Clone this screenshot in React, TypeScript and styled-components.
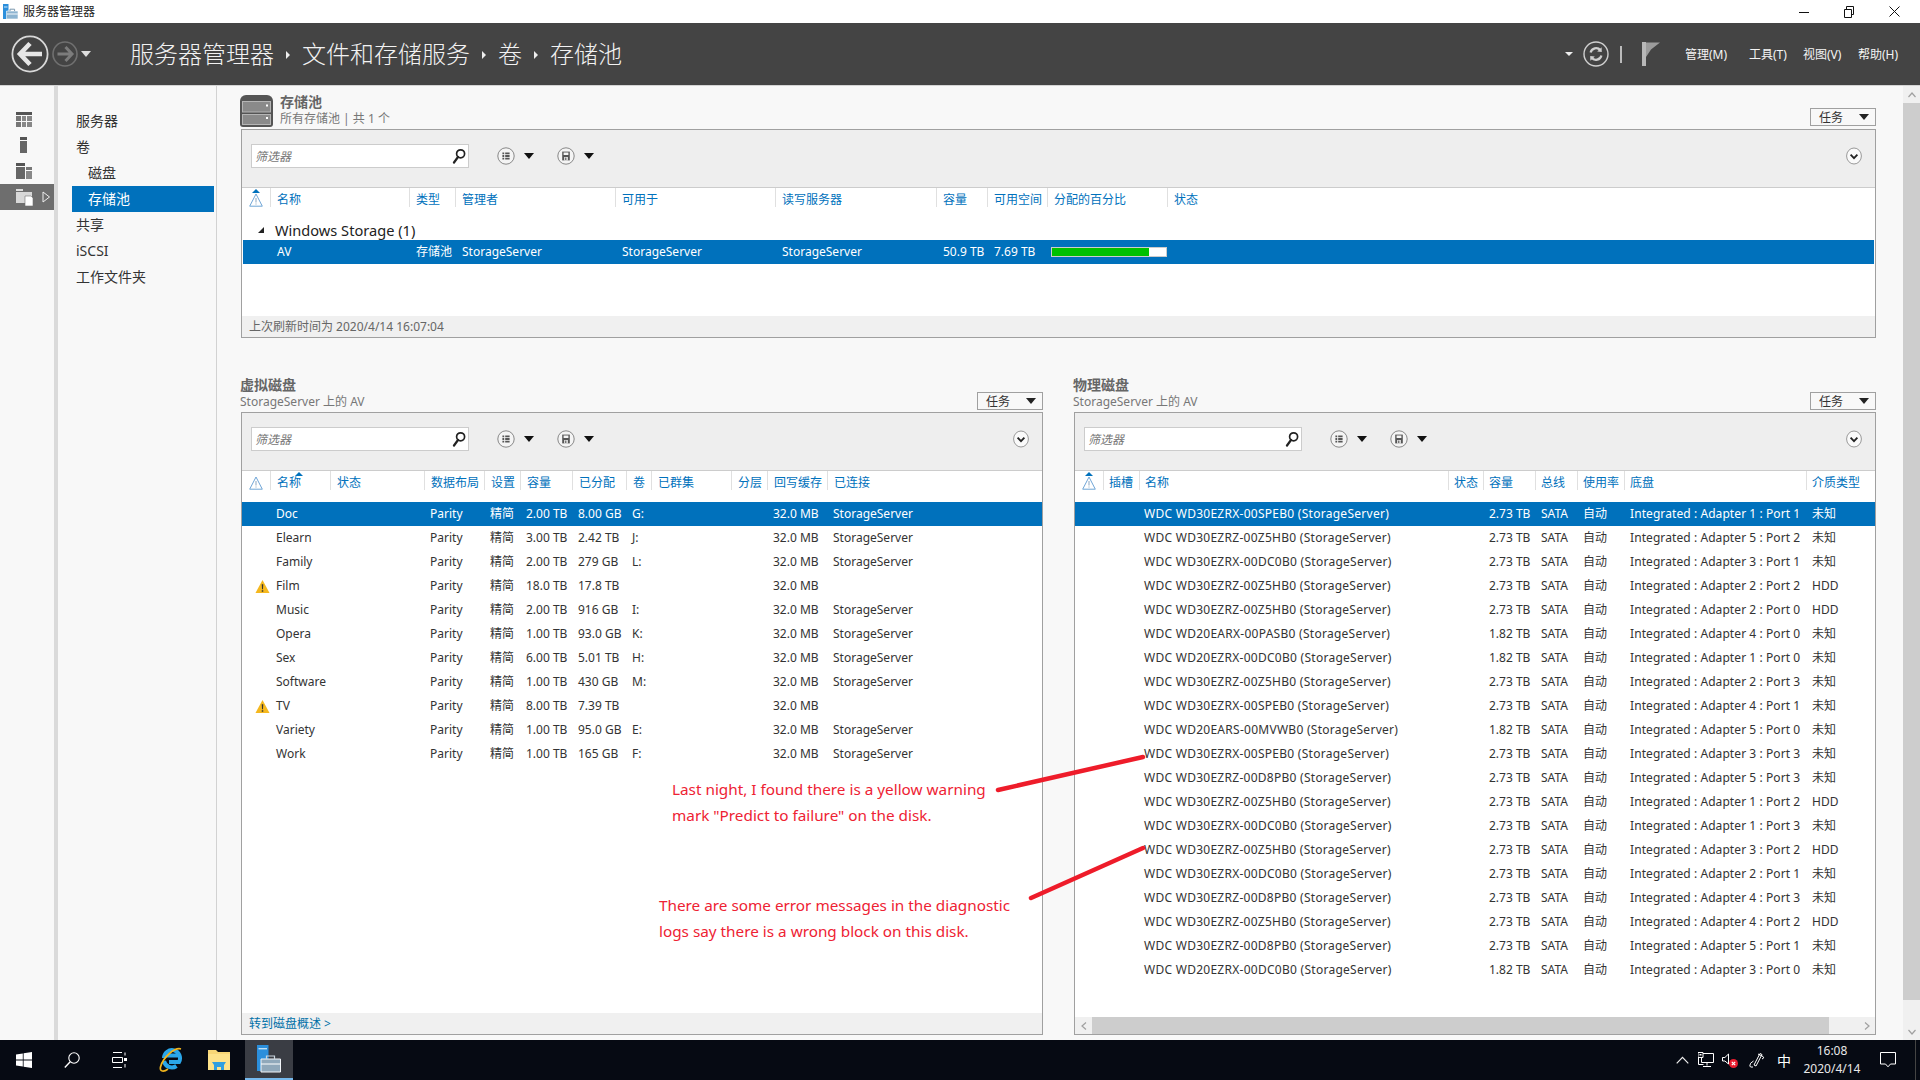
import React from "react";
import styled, { createGlobalStyle } from "styled-components";

const FONT = `"Noto Sans", "Noto Sans CJK SC", sans-serif`;
const BLUE = "#0071bc";

const Global = createGlobalStyle`
  html, body { margin: 0; padding: 0; background: #f8f8f8; }
  * { box-sizing: border-box; }
  body { font-family: ${FONT}; font-size: 12px; color: #333; overflow: hidden; }
`;

const Page = styled.div`
  position: relative; width: 1920px; height: 1080px; display: flex; flex-direction: column; overflow: hidden;
`;
const TitleBar = styled.div`
  height: 23px; flex: none; background: #fff; display: flex; align-items: center; padding-left: 3px; color: #222;
`;
const TitleText = styled.span`margin-left: 5px; font-size: 12px; line-height: 23px;`;
const WinControls = styled.div`margin-left: auto; display: flex; height: 23px; align-items: center; gap: 35px; padding-right: 20px;`;

const Header = styled.header`
  height: 63px; flex: none; background: #444; border-bottom: 1px solid #d4d4d4; display: flex; align-items: center; color: #fff;
`;
const NavButtons = styled.div`margin-left: 11px; display: flex; align-items: center; gap: 3px; width: 119px;`;
const Crumbs = styled.div`display: flex; align-items: center; font-size: 24px; font-weight: 300; color: #f2f2f2; line-height: 30px; white-space: nowrap;`;
const CrumbArrow = styled.i`
  display: block; width: 0; height: 0; border-left: 4px solid #eee; border-top: 4px solid transparent; border-bottom: 4px solid transparent; margin: 2px 12px 0 12px;
`;
const HeaderRight = styled.div`margin-left: auto; display: flex; align-items: center; height: 100%;`;
const Caret = styled.i<{ $w: number; $color: string; $mr?: number }>`
  display: block; width: 0; height: 0;
  border-top: ${(p) => Math.round(p.$w * 0.55)}px solid ${(p) => p.$color};
  border-left: ${(p) => p.$w / 2}px solid transparent;
  border-right: ${(p) => p.$w / 2}px solid transparent;
  margin-right: ${(p) => p.$mr ?? 0}px;
`;
const HDivider = styled.i`display: block; width: 2px; height: 17px; background: #bbb; margin: 0 20px 0 11px;`;
const MenuRow = styled.nav`display: flex; margin-left: 25px; margin-right: 21px;`;
const MenuItem = styled.span<{ $w: number }>`width: ${(p) => p.$w}px; font-size: 12px; color: #f4f4f4; white-space: nowrap;`;

const Body = styled.div`flex: 1; min-height: 0; display: flex;`;
const Rail = styled.aside`
  width: 58px; flex: none; background: #f8f8f8; border-right: 4px solid #dadada; padding-top: 20px;
`;
const RailItem = styled.div<{ $active?: boolean }>`
  height: 26px; display: flex; align-items: center; padding-left: 16px; position: relative;
  background: ${(p) => (p.$active ? "#6e6e6e" : "transparent")};
`;
const RailArrow = styled.svg`position: absolute; left: 42px; top: 7px;`;
const SideNav = styled.nav`
  width: 159px; flex: none; background: #f8f8f8; border-right: 1px solid #d2d2d2; padding-top: 22px;
`;
const NavItem = styled.div<{ $sub?: boolean; $active?: boolean }>`
  height: 26px; line-height: 26px; margin: 0 2px 0 14px; font-size: 14px; padding-left: ${(p) => (p.$sub ? 16 : 4)}px;
  background: ${(p) => (p.$active ? BLUE : "transparent")}; color: ${(p) => (p.$active ? "#fff" : "#333")};
`;

const Main = styled.main`
  flex: 1; min-width: 0; background: #f8f8f8; padding: 0 27px 5px 24px; display: flex; flex-direction: column;
`;
const SectionHead = styled.div<{ $h: number }>`
  height: ${(p) => p.$h}px; flex: none; display: flex; align-items: flex-end; justify-content: space-between; padding-bottom: 2px;
`;
const HeadLeft = styled.div`display: flex; align-items: flex-end; margin-left: -1px; gap: 7px;`;
const TitleBlock = styled.div`line-height: 16px;`;
const SecTitle = styled.div`font-size: 14px; font-weight: 700; color: #666; line-height: 17px; margin-bottom: 1px;`;
const SecSub = styled.div`font-size: 12px; color: #777; line-height: 16px;`;
const TaskBtn = styled.div<{ $low?: boolean }>`
  width: 66px; height: 18px; border: 1px solid #a0a0a0; background: #f8f8f8; display: flex; align-items: center; justify-content: space-between;
  padding: 0 6px 0 8px; font-size: 12px; color: #333; margin-bottom: ${(p) => (p.$low ? 0 : 1)}px;
`;
const Panel = styled.section<{ $h?: number }>`
  ${(p) => (p.$h ? `height: ${p.$h}px; flex: none;` : "flex: 1; min-height: 0;")}
  border: 1px solid #a0a0a0; background: #fff; display: flex; flex-direction: column; overflow: hidden;
`;
const Toolbar = styled.div`
  height: 58px; flex: none; background: #eee; border-bottom: 1px solid #ccc; padding: 14px 13px 0 9px; display: flex; align-items: flex-start;
`;
const Filter = styled.div`
  width: 218px; height: 24px; background: #fff; border: 1px solid #ccc; display: flex; align-items: center; justify-content: space-between; padding: 0 2px 0 3px;
  font-size: 12px; font-style: italic; color: #777;
`;
const ToolBtn = styled.div<{ $first?: boolean }>`
  display: flex; align-items: center; gap: 9px; height: 24px; margin-left: ${(p) => (p.$first ? 28 : 23)}px;
`;
const Collapse = styled.div`margin-left: auto; height: 24px; display: flex; align-items: center;`;
const RowGrid = styled.div<{ $cols: string }>`
  display: grid; grid-template-columns: ${(p) => p.$cols};
`;
const HeadRow = styled(RowGrid)<{ $h: number }>`height: ${(p) => p.$h}px; flex: none; position: relative;`;
const HeadCell = styled.div<{ $pad?: number }>`
  height: 19px; line-height: 23px; padding-left: ${(p) => p.$pad ?? 6}px; color: ${BLUE}; font-size: 12px; white-space: nowrap;
  border-left: 1px solid #e0e0e0; position: relative;
`;
const WarnHead = styled.div`height: 19px; padding: 5px 0 0 7px; position: relative;`;
const SortMark = styled.i<{ $left: number }>`
  position: absolute; top: 1px; left: ${(p) => p.$left}px; width: 0; height: 0;
  border-bottom: 4px solid ${BLUE}; border-left: 4px solid transparent; border-right: 4px solid transparent;
`;
const GroupRow = styled.div`
  height: 22px; display: flex; align-items: center; font-size: 14.6px; color: #222; padding: 1px 0 0 16px; gap: 11px; line-height: 22px;
`;
const GroupMark = styled.i`
  width: 0; height: 0; border-bottom: 6px solid #222; border-left: 6px solid transparent; margin-top: 1px;
`;
const DataRow = styled(RowGrid)<{ $sel?: boolean; $inset?: boolean }>`
  height: 24px; line-height: 24px; font-size: 12px; flex: none;
  ${(p) => (p.$inset ? "margin: 0 1px;" : "")}
  background: ${(p) => (p.$sel ? BLUE : "transparent")}; color: ${(p) => (p.$sel ? "#fff" : "#333")};
`;
const Cell = styled.div`padding-left: 6px; white-space: nowrap; display: flex; align-items: center;`;
const DiskName = styled(Cell)`padding-left: 5px; letter-spacing: 0.27px;`;
const PortCell = styled(Cell)`letter-spacing: 0.08px;`;
const IconCell = styled.div`padding-left: 13px; display: flex; align-items: center;`;
const Progress = styled.div`width: 116px; height: 10px; background: #fff; border: 1px solid #ccc; margin-left: -3px;`;
const ProgressFill = styled.div`height: 100%; background: #00c000;`;
const Rows = styled.div`flex: 1; min-height: 0; overflow: hidden;`;
const Footer = styled.div`
  height: 21px; flex: none; background: #f0f0f0; line-height: 22px; font-size: 12px; color: #666; padding-left: 7px;
`;
const FootLink = styled.span`color: #0070a8;`;
const Lower = styled.div`flex: 1; min-height: 0; display: grid; grid-template-columns: 802px 802px; column-gap: 31px;`;
const Column = styled.div`display: flex; flex-direction: column; min-height: 0;`;
const HScroll = styled.div`height: 17px; flex: none; background: #f0f0f0; display: flex; align-items: center;`;
const HArrow = styled.div`width: 17px; flex: none; display: flex; justify-content: center;`;
const HThumb = styled.div`width: 737px; height: 17px; background: #cdcdcd;`;
const HRest = styled.div`flex: 1;`;
const VScroll = styled.div`width: 17px; flex: none; background: #f0f0f0; display: flex; flex-direction: column; align-items: center;`;
const VArrow = styled.div`height: 17px; flex: none; display: flex; align-items: center; justify-content: center;`;
const VThumb = styled.div`width: 17px; height: 897px; flex: none; background: #cdcdcd;`;
const VRest = styled.div`flex: 1;`;

const Taskbar = styled.footer`
  height: 40px; flex: none; background: #060a13; display: flex; align-items: center; color: #f0f0f0; position: relative;
`;
const TaskSlot = styled.div<{ $active?: boolean; $ml?: number }>`
  width: 48px; height: 40px; display: flex; align-items: center; justify-content: center; margin-left: ${(p) => p.$ml ?? 0}px;
  ${(p) => (p.$active ? "background: #3a3d44; border-bottom: 2px solid #76b9ed;" : "")}
`;
const TaskRight = styled.div`margin-left: auto; display: flex; align-items: center; height: 40px;`;
const Tray = styled.div<{ $w: number }>`width: ${(p) => p.$w}px; display: flex; align-items: center; justify-content: center;`;
const ImeGlyph = styled.span`font-size: 14px; color: #fff;`;
const Clock = styled.div`width: 72px; margin-right: 11px; text-align: center; font-size: 12px; line-height: 18px; color: #e8e8e8;`;
const Edge = styled.i`display: block; width: 1px; height: 40px; background: #444; margin-left: 18px; margin-right: 4px;`;

const Overlay = styled.svg`position: absolute; left: 0; top: 0; pointer-events: none;`;
const Note = styled.div<{ $x: number; $y: number }>`
  position: absolute; left: ${(p) => p.$x}px; top: ${(p) => p.$y}px; color: #ee2233; font-size: 15.3px; line-height: 26px; white-space: nowrap;
`;

/* ---------- icons ---------- */
const Warn = ({ size = 15 }: { size?: number }) => (
  <svg width={size} height={size} viewBox="0 0 16 16">
    <path d="M8 1 L15.5 15 H.5 Z" fill="#f5b81e" />
    <path d="M7.2 5.5h1.6l-.3 5.5h-1zM7.2 12h1.6v1.6H7.2z" fill="#333" />
  </svg>
);
const WarnOutline = () => (
  <svg width="14" height="14" viewBox="0 0 14 14">
    <path d="M7 1 L13.3 13.2 H.7 Z" fill="none" stroke="#6fa5d6" strokeWidth="1" />
    <path d="M6.6 5h.8v4.6h-.8zM6.6 10.4h.8v1h-.8z" fill="#6f8fb0" />
  </svg>
);
const Search = () => (
  <svg width="14" height="16" viewBox="0 0 14 16">
    <circle cx="8.6" cy="5.8" r="4" fill="none" stroke="#222" strokeWidth="1.7" />
    <path d="M6 9 L2 14.5" stroke="#222" strokeWidth="2.2" strokeLinecap="round" />
  </svg>
);
const ListIcon = () => (
  <svg width="18" height="18" viewBox="0 0 18 18">
    <circle cx="9" cy="9" r="8.2" fill="#f4f4f4" stroke="#888" strokeWidth="1" />
    <path d="M5.4 5.5h1.8v1.8H5.4zM8.2 5.5h4.4v1.8H8.2zM5.4 8.1h1.8v1.8H5.4zM8.2 8.1h4.4v1.8H8.2zM5.4 10.7h1.8v1.8H5.4zM8.2 10.7h4.4v1.8H8.2z" fill="#555" />
  </svg>
);
const SaveIcon = () => (
  <svg width="18" height="18" viewBox="0 0 18 18">
    <circle cx="9" cy="9" r="8.2" fill="#f4f4f4" stroke="#888" strokeWidth="1" />
    <path d="M5.2 4.6h7.6v8.8H5.2z" fill="#555" />
    <path d="M6.6 5.4h4.8v2.6H6.6zM7.2 10h3.6v3.4H7.2z" fill="#f4f4f4" />
    <path d="M8.2 10.6h1.2v2.4H8.2z" fill="#555" />
  </svg>
);
const ChevronCircle = () => (
  <svg width="16" height="18" viewBox="0 0 16 18">
    <ellipse cx="8" cy="9" rx="7.4" ry="8" fill="#fafafa" stroke="#999" strokeWidth="1" />
    <path d="M4.6 7.6 L8 11.2 L11.4 7.6" fill="none" stroke="#222" strokeWidth="1.8" />
  </svg>
);
const AppLogo = () => (
  <svg width="15" height="17" viewBox="0 0 15 17">
    <path d="M0 1h5.5v15H0z" fill="#2b8fdc" />
    <path d="M1 3.5h3.5v1H1z" fill="#cfe6f8" />
    <path d="M3.5 8h11.5v8H3.5z" fill="#8db4d1" stroke="#fff" strokeWidth=".6" />
    <path d="M7 8V6.2h4.6V8" fill="none" stroke="#7a97ad" strokeWidth="1" />
    <path d="M3.8 11h11" stroke="#f4f8fb" strokeWidth="1" />
  </svg>
);
const BackBtn = () => (
  <svg width="38" height="38" viewBox="0 0 38 38">
    <circle cx="19" cy="19" r="17.6" fill="none" stroke="#d8d8d8" strokeWidth="1.8" />
    <path d="M19 8.5 L9 19 L19 29.5 M9.5 19 H31" fill="none" stroke="#e6e6e6" strokeWidth="4.6" />
  </svg>
);
const ForwardBtn = () => (
  <svg width="26" height="26" viewBox="0 0 26 26">
    <circle cx="13" cy="13" r="12" fill="none" stroke="#707070" strokeWidth="1.6" />
    <path d="M13.5 6 L20 13 L13.5 20 M20 13 H5.5" fill="none" stroke="#7c7c7c" strokeWidth="3" />
  </svg>
);
const RefreshIcon = () => (
  <svg width="26" height="26" viewBox="0 0 26 26">
    <circle cx="13" cy="13" r="12" fill="none" stroke="#cfcfcf" strokeWidth="1.4" />
    <path d="M7.6 11.6 A5.6 5.6 0 0 1 17.4 9.2" fill="none" stroke="#cfcfcf" strokeWidth="2.2" />
    <path d="M18.6 6.2 L18.8 11 L14.2 10.4 Z" fill="#cfcfcf" />
    <path d="M18.4 14.4 A5.6 5.6 0 0 1 8.6 16.8" fill="none" stroke="#cfcfcf" strokeWidth="2.2" />
    <path d="M7.4 19.8 L7.2 15 L11.8 15.6 Z" fill="#cfcfcf" />
  </svg>
);
const FlagIcon = () => (
  <svg width="18" height="24" viewBox="0 0 18 24">
    <path d="M0 0h4v24H0z" fill="#b8b8b8" />
    <path d="M4 .5h14L9 7.5 L4 15z" fill="#9c9c9c" />
  </svg>
);
const MinIcon = () => (<svg width="10" height="10" viewBox="0 0 10 10"><path d="M0 5.5h10" stroke="#111" strokeWidth="1" /></svg>);
const RestoreIcon = () => (
  <svg width="10" height="12" viewBox="0 0 10 12">
    <path d="M.5 3.5h7v8h-7z M2.5 3.5v-3h7v8h-2" fill="none" stroke="#111" strokeWidth="1" />
  </svg>
);
const CloseIcon = () => (<svg width="11" height="11" viewBox="0 0 11 11"><path d="M.5.5l10 10M10.5.5l-10 10" stroke="#111" strokeWidth="1" /></svg>);
const ServerIcon = () => (
  <svg width="33" height="32" viewBox="0 0 33 32">
    <path d="M0 6a6 6 0 0 1 6-6h21a6 6 0 0 1 6 6v23a3 3 0 0 1-3 3H3a3 3 0 0 1-3-3z" fill="#555" />
    <rect x="2.5" y="6.5" width="28" height="10.5" fill="#8a8a8a" stroke="#b5b5b5" strokeWidth="1" />
    <rect x="2.5" y="19.5" width="28" height="10" fill="#8a8a8a" stroke="#b5b5b5" strokeWidth="1" />
    <rect x="26" y="9.5" width="2" height="2" fill="#fff" />
    <rect x="26" y="22" width="2" height="2" fill="#fff" />
  </svg>
);
const RailDash = () => (
  <svg width="16" height="15" viewBox="0 0 16 15">
    <path d="M0 0h16v3H0z" fill="#555" />
    <path d="M0 4h5v5H0zM0 10h5v5H0z" fill="#777" />
    <path d="M6 4h4v5H6zM6 10h4v5H6zM11 4h5v5h-5zM11 10h5v5h-5z" fill="#888" />
  </svg>
);
const RailInfo = () => (
  <svg width="16" height="16" viewBox="0 0 16 16"><path d="M4 0h7v3H4z" fill="#555" /><path d="M4 4h7v12H4z" fill="#666" /></svg>
);
const RailAll = () => (
  <svg width="16" height="16" viewBox="0 0 16 16">
    <path d="M0 0h9v3H0z" fill="#555" /><path d="M0 4h9v12H0z" fill="#666" />
    <path d="M10 4h6v3h-6z" fill="#777" /><path d="M10 8h6v8h-6z" fill="#888" />
  </svg>
);
const RailFiles = () => (
  <svg width="17" height="17" viewBox="0 0 17 17">
    <path d="M0 0h7v2H0z" fill="#ddd" /><path d="M0 3h16v11H0z" fill="#d8d8d8" />
    <path d="M9 7h6l2 2v8H9z" fill="#fff" stroke="#6e6e6e" strokeWidth=".6" />
  </svg>
);
const SmallUp = () => (<svg width="8" height="6" viewBox="0 0 8 6"><path d="M.5 5L4 1l3.5 4" fill="none" stroke="#a0a0a0" strokeWidth="1.2" /></svg>);
const SmallDown = () => (<svg width="8" height="6" viewBox="0 0 8 6"><path d="M.5 1L4 5l3.5-4" fill="none" stroke="#a0a0a0" strokeWidth="1.2" /></svg>);
const SmallLeft = () => (<svg width="6" height="8" viewBox="0 0 6 8"><path d="M5 .5L1 4l4 3.5" fill="none" stroke="#a0a0a0" strokeWidth="1.2" /></svg>);
const SmallRight = () => (<svg width="6" height="8" viewBox="0 0 6 8"><path d="M1 .5L5 4 1 7.5" fill="none" stroke="#a0a0a0" strokeWidth="1.2" /></svg>);

const WinLogo = () => (
  <svg width="16" height="16" viewBox="0 0 16 16">
    <path d="M0 2.4 L6.8 1.4 V7.5 H0z M7.6 1.3 L16 0 V7.5 H7.6z M0 8.4 H6.8 V14.6 L0 13.6z M7.6 8.4 H16 V16 L7.6 14.7z" fill="#fff" />
  </svg>
);
const TaskSearch = () => (
  <svg width="16" height="16" viewBox="0 0 16 16">
    <circle cx="10" cy="6" r="5.2" fill="none" stroke="#fff" strokeWidth="1.1" />
    <path d="M6.2 9.8 L.8 15.4" stroke="#fff" strokeWidth="1.4" />
  </svg>
);
const TaskView = () => (
  <svg width="16" height="16" viewBox="0 0 16 16">
    <path d="M1 .5h9M1 15.5h9M.5 5.5h10v5H.5z M13 .5v3M13 12v3.5" fill="none" stroke="#fff" strokeWidth="1" />
    <path d="M12 6h3v3h-3z" fill="#fff" />
  </svg>
);
const IEIcon = () => (
  <svg width="24" height="26" viewBox="0 0 24 26">
    <path d="M5 11 a8 8 0 1 1 15 4 h-10 M20 8.5 H6 M17.5 19 a8 8 0 0 1 -12.5 -5" fill="none" stroke="#2aa7ea" strokeWidth="4" />
    <path d="M22 2 C16 0 4 10 1.5 20 C0.5 25 5 25 9 22" fill="none" stroke="#f2b51d" strokeWidth="1.7" />
  </svg>
);
const FolderIcon = () => (
  <svg width="22" height="22" viewBox="0 0 22 22">
    <path d="M0 1h8l2 2h12v18H0z" fill="#f7d676" />
    <path d="M0 5h22v16H0z" fill="#fde28a" />
    <path d="M4 13h14l-2 3v5h-3v-3H9v3H6v-5z" fill="#2f9fe0" />
  </svg>
);
const ServerTask = () => (
  <svg width="24" height="28" viewBox="0 0 24 28">
    <path d="M0 0h11.5v26H0z" fill="#2b8fdc" />
    <path d="M1.5 3h8.5v1.4H1.5z" fill="#bfe0f7" />
    <path d="M4 14h19.5v13H4z" fill="#90a8ba" stroke="#f0f4f8" strokeWidth="1" />
    <path d="M9.5 14v-3h8v3" fill="none" stroke="#c9d5de" strokeWidth="1.2" />
    <path d="M4 19h19.5" stroke="#fff" strokeWidth="1" />
  </svg>
);
const TrayCaret = () => (<svg width="13" height="8" viewBox="0 0 13 8"><path d="M.7 7.3L6.5 1.3l5.8 6" fill="none" stroke="#eee" strokeWidth="1.2" /></svg>);
const TrayNet = () => (
  <svg width="16" height="16" viewBox="0 0 16 16">
    <path d="M3.5 1.5h12v9h-12z M9 10.5v3 M5 14.5h8 M.5 5.5v7h5" fill="none" stroke="#fff" strokeWidth="1" />
    <path d="M0 .5h5v5H0z" fill="#060a13" stroke="#fff" strokeWidth="1" />
    <path d="M1.5 2h2v1.5h-2z" fill="#fff" />
  </svg>
);
const TrayVol = () => (
  <svg width="16" height="15" viewBox="0 0 16 15">
    <path d="M.5 4.5h2.4L6.5 1v10L2.9 8H.5z" fill="none" stroke="#fff" strokeWidth="1" />
    <circle cx="11.5" cy="10.5" r="4.5" fill="#e81c2e" />
    <path d="M9.8 8.8l3.4 3.4M13.2 8.8l-3.4 3.4" stroke="#fff" strokeWidth="1.2" />
  </svg>
);
const TrayPen = () => (
  <svg width="16" height="16" viewBox="0 0 16 16">
    <path d="M5 13 L11 1.5 L13 2.5 L7 14z M9 2 L14 4.5 Q16 6 13 7 M4.5 9 Q.5 11 .8 14 Q1 15.6 4 15" fill="none" stroke="#fff" strokeWidth="1" />
  </svg>
);
const TrayNote = () => (
  <svg width="16" height="16" viewBox="0 0 16 16">
    <path d="M.5 .5h15v11.5h-5L8 14.8 5.5 12H.5z" fill="none" stroke="#fff" strokeWidth="1" />
  </svg>
);

/* ---------- data ---------- */
const poolCols = "28px 139px 46px 160px 160px 161px 51px 60px 120px 36px 1fr";
const poolHead = ["名称", "类型", "管理者", "可用于", "读写服务器", "容量", "可用空间", "分配的百分比", "状态"];

const vdCols = "28px 60px 94px 60px 36px 52px 54px 25px 80px 36px 60px 1fr";
const vdHead = ["名称", "状态", "数据布局", "设置", "容量", "已分配", "卷", "已群集", "分层", "回写缓存", "已连接"];
const vdRows: [string, string, string, string, boolean, boolean][] = [
  ["Doc", "2.00 TB", "8.00 GB", "G:", false, true],
  ["Elearn", "3.00 TB", "2.42 TB", "J:", false, true],
  ["Family", "2.00 TB", "279 GB", "L:", false, true],
  ["Film", "18.0 TB", "17.8 TB", "", true, false],
  ["Music", "2.00 TB", "916 GB", "I:", false, true],
  ["Opera", "1.00 TB", "93.0 GB", "K:", false, true],
  ["Sex", "6.00 TB", "5.01 TB", "H:", false, true],
  ["Software", "1.00 TB", "430 GB", "M:", false, true],
  ["TV", "8.00 TB", "7.39 TB", "", true, false],
  ["Variety", "1.00 TB", "95.0 GB", "E:", false, true],
  ["Work", "1.00 TB", "165 GB", "F:", false, true],
];

const pdCols = "28px 36px 309px 35px 52px 42px 47px 182px 60px 1fr";
const pdHead = ["插槽", "名称", "状态", "容量", "总线", "使用率", "底盘", "介质类型"];
const pdRows: [string, string, string, string][] = [
  ["WDC WD30EZRX-00SPEB0", "2.73 TB", "Adapter 1 : Port 1", "未知"],
  ["WDC WD30EZRZ-00Z5HB0", "2.73 TB", "Adapter 5 : Port 2", "未知"],
  ["WDC WD30EZRX-00DC0B0", "2.73 TB", "Adapter 3 : Port 1", "未知"],
  ["WDC WD30EZRZ-00Z5HB0", "2.73 TB", "Adapter 2 : Port 2", "HDD"],
  ["WDC WD30EZRZ-00Z5HB0", "2.73 TB", "Adapter 2 : Port 0", "HDD"],
  ["WDC WD20EARX-00PASB0", "1.82 TB", "Adapter 4 : Port 0", "未知"],
  ["WDC WD20EZRX-00DC0B0", "1.82 TB", "Adapter 1 : Port 0", "未知"],
  ["WDC WD30EZRZ-00Z5HB0", "2.73 TB", "Adapter 2 : Port 3", "未知"],
  ["WDC WD30EZRX-00SPEB0", "2.73 TB", "Adapter 4 : Port 1", "未知"],
  ["WDC WD20EARS-00MVWB0", "1.82 TB", "Adapter 5 : Port 0", "未知"],
  ["WDC WD30EZRX-00SPEB0", "2.73 TB", "Adapter 3 : Port 3", "未知"],
  ["WDC WD30EZRZ-00D8PB0", "2.73 TB", "Adapter 5 : Port 3", "未知"],
  ["WDC WD30EZRZ-00Z5HB0", "2.73 TB", "Adapter 1 : Port 2", "HDD"],
  ["WDC WD30EZRX-00DC0B0", "2.73 TB", "Adapter 1 : Port 3", "未知"],
  ["WDC WD30EZRZ-00Z5HB0", "2.73 TB", "Adapter 3 : Port 2", "HDD"],
  ["WDC WD30EZRX-00DC0B0", "2.73 TB", "Adapter 2 : Port 1", "未知"],
  ["WDC WD30EZRZ-00D8PB0", "2.73 TB", "Adapter 4 : Port 3", "未知"],
  ["WDC WD30EZRZ-00Z5HB0", "2.73 TB", "Adapter 4 : Port 2", "HDD"],
  ["WDC WD30EZRZ-00D8PB0", "2.73 TB", "Adapter 5 : Port 1", "未知"],
  ["WDC WD20EZRX-00DC0B0", "1.82 TB", "Adapter 3 : Port 0", "未知"],
];

const ToolbarRow = () => (
  <Toolbar>
    <Filter>
      <span>筛选器</span>
      <Search />
    </Filter>
    <ToolBtn $first><ListIcon /><Caret $w={11} $color="#111" /></ToolBtn>
    <ToolBtn><SaveIcon /><Caret $w={11} $color="#111" /></ToolBtn>
    <Collapse><ChevronCircle /></Collapse>
  </Toolbar>
);
const Tasks = ({ low }: { low?: boolean }) => (
  <TaskBtn $low={low}>
    <span>任务</span>
    <Caret $w={10} $color="#222" />
  </TaskBtn>
);

export default function App() {
  return (
    <Page>
      <Global />
      <TitleBar>
        <AppLogo />
        <TitleText>服务器管理器</TitleText>
        <WinControls><MinIcon /><RestoreIcon /><CloseIcon /></WinControls>
      </TitleBar>
      <Header>
        <NavButtons>
          <BackBtn />
          <ForwardBtn />
          <Caret $w={10} $color="#ddd" />
        </NavButtons>
        <Crumbs>
          服务器管理器<CrumbArrow />文件和存储服务<CrumbArrow />卷<CrumbArrow />存储池
        </Crumbs>
        <HeaderRight>
          <Caret $w={8} $color="#eee" $mr={10} />
          <RefreshIcon />
          <HDivider />
          <FlagIcon />
          <MenuRow>
            <MenuItem $w={64}>管理(M)</MenuItem>
            <MenuItem $w={54}>工具(T)</MenuItem>
            <MenuItem $w={55}>视图(V)</MenuItem>
            <MenuItem $w={41}>帮助(H)</MenuItem>
          </MenuRow>
        </HeaderRight>
      </Header>
      <Body>
        <Rail>
          <RailItem><RailDash /></RailItem>
          <RailItem><RailInfo /></RailItem>
          <RailItem><RailAll /></RailItem>
          <RailItem $active>
            <RailFiles />
            <RailArrow width="9" height="12" viewBox="0 0 9 12">
              <path d="M1 1 L7.5 6 L1 11 Z" fill="#6e6e6e" stroke="#eee" strokeWidth="1" />
            </RailArrow>
          </RailItem>
        </Rail>
        <SideNav>
          <NavItem>服务器</NavItem>
          <NavItem>卷</NavItem>
          <NavItem $sub>磁盘</NavItem>
          <NavItem $sub $active>存储池</NavItem>
          <NavItem>共享</NavItem>
          <NavItem>iSCSI</NavItem>
          <NavItem>工作文件夹</NavItem>
        </SideNav>
        <Main>
          <SectionHead $h={43}>
            <HeadLeft>
              <ServerIcon />
              <TitleBlock>
                <SecTitle>存储池</SecTitle>
                <SecSub>所有存储池 | 共 1 个</SecSub>
              </TitleBlock>
            </HeadLeft>
            <Tasks />
          </SectionHead>
          <Panel $h={209}>
            <ToolbarRow />
            <HeadRow $cols={poolCols} $h={30}>
              <WarnHead><WarnOutline /><SortMark $left={10} /></WarnHead>
              {poolHead.map((h) => <HeadCell key={h}>{h}</HeadCell>)}
            </HeadRow>
            <GroupRow><GroupMark />Windows Storage (1)</GroupRow>
            <DataRow $cols={poolCols} $sel $inset>
              <Cell />
              <Cell>AV</Cell>
              <Cell>存储池</Cell>
              <Cell>StorageServer</Cell>
              <Cell>StorageServer</Cell>
              <Cell>StorageServer</Cell>
              <Cell>50.9 TB</Cell>
              <Cell>7.69 TB</Cell>
              <Cell><Progress><ProgressFill style={{ width: "85%" }} /></Progress></Cell>
              <Cell />
            </DataRow>
            <Rows />
            <Footer>上次刷新时间为 2020/4/14 16:07:04</Footer>
          </Panel>
          <Lower>
            <Column>
              <SectionHead $h={74}>
                <HeadLeft>
                  <TitleBlock>
                    <SecTitle>虚拟磁盘</SecTitle>
                    <SecSub>StorageServer 上的 AV</SecSub>
                  </TitleBlock>
                </HeadLeft>
                <Tasks low />
              </SectionHead>
              <Panel>
                <ToolbarRow />
                <HeadRow $cols={vdCols} $h={31}>
                  <WarnHead><WarnOutline /></WarnHead>
                  {vdHead.map((h, i) => (
                    <HeadCell key={h}>{h}{i === 0 && <SortMark $left={24} />}</HeadCell>
                  ))}
                </HeadRow>
                <Rows>
                  {vdRows.map(([name, cap, alloc, vol, warn, conn], i) => (
                    <DataRow key={name} $cols={vdCols} $sel={i === 0}>
                      <IconCell>{warn && <Warn />}</IconCell>
                      <Cell>{name}</Cell>
                      <Cell />
                      <Cell>Parity</Cell>
                      <Cell>精简</Cell>
                      <Cell>{cap}</Cell>
                      <Cell>{alloc}</Cell>
                      <Cell>{vol}</Cell>
                      <Cell />
                      <Cell />
                      <Cell>32.0 MB</Cell>
                      <Cell>{conn ? "StorageServer" : ""}</Cell>
                    </DataRow>
                  ))}
                </Rows>
                <Footer><FootLink>转到磁盘概述 &gt;</FootLink></Footer>
              </Panel>
            </Column>
            <Column>
              <SectionHead $h={74}>
                <HeadLeft>
                  <TitleBlock>
                    <SecTitle>物理磁盘</SecTitle>
                    <SecSub>StorageServer 上的 AV</SecSub>
                  </TitleBlock>
                </HeadLeft>
                <Tasks low />
              </SectionHead>
              <Panel>
                <ToolbarRow />
                <HeadRow $cols={pdCols} $h={31}>
                  <WarnHead><WarnOutline /><SortMark $left={10} /></WarnHead>
                  {pdHead.map((h) => <HeadCell key={h} $pad={5}>{h}</HeadCell>)}
                </HeadRow>
                <Rows>
                  {pdRows.map(([name, cap, port, media], i) => (
                    <DataRow key={i} $cols={pdCols} $sel={i === 0}>
                      <Cell />
                      <Cell />
                      <DiskName>{name} (StorageServer)</DiskName>
                      <Cell />
                      <Cell>{cap}</Cell>
                      <Cell>SATA</Cell>
                      <Cell>自动</Cell>
                      <PortCell>Integrated : {port}</PortCell>
                      <Cell>{media}</Cell>
                    </DataRow>
                  ))}
                </Rows>
                <HScroll>
                  <HArrow><SmallLeft /></HArrow>
                  <HThumb />
                  <HRest />
                  <HArrow><SmallRight /></HArrow>
                </HScroll>
              </Panel>
            </Column>
          </Lower>
        </Main>
        <VScroll>
          <VArrow><SmallUp /></VArrow>
          <VThumb />
          <VRest />
          <VArrow><SmallDown /></VArrow>
        </VScroll>
      </Body>
      <Taskbar>
        <TaskSlot><WinLogo /></TaskSlot>
        <TaskSlot><TaskSearch /></TaskSlot>
        <TaskSlot><TaskView /></TaskSlot>
        <TaskSlot $ml={3}><IEIcon /></TaskSlot>
        <TaskSlot><FolderIcon /></TaskSlot>
        <TaskSlot $active $ml={2}><ServerTask /></TaskSlot>
        <TaskRight>
          <Tray $w={24}><TrayCaret /></Tray>
          <Tray $w={24}><TrayNet /></Tray>
          <Tray $w={24}><TrayVol /></Tray>
          <Tray $w={30}><TrayPen /></Tray>
          <Tray $w={24}><ImeGlyph>中</ImeGlyph></Tray>
          <Clock>16:08<br />2020/4/14</Clock>
          <Tray $w={18}><TrayNote /></Tray>
          <Edge />
        </TaskRight>
      </Taskbar>
      <Overlay width="1920" height="1080" viewBox="0 0 1920 1080">
        <path d="M998 790 L1143 757 M1031 898 L1143 848" stroke="#ee1c2a" strokeWidth="4.5" strokeLinecap="round" />
      </Overlay>
      <Note $x={672} $y={776}>Last night, I found there is a yellow warning<br />mark "Predict to failure" on the disk.</Note>
      <Note $x={659} $y={892}>There are some error messages in the diagnostic<br />logs say there is a wrong block on this disk.</Note>
    </Page>
  );
}
